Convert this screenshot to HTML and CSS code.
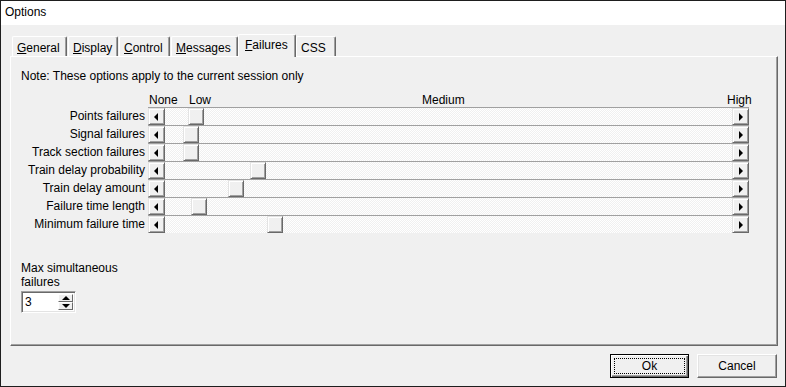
FILE: index.html
```html
<!DOCTYPE html>
<html lang="en">
<head>
    <meta charset="UTF-8">
    <meta name="viewport" content="width=device-width, initial-scale=1.0">
    <title>Options</title>
    <link rel="stylesheet" href="styles.css">
</head>
<body>
    <div class="window">
        <div class="titlebar">Options</div>

        <div class="client">
            <div class="tabs">
                <div class="tab tab-general"><u>G</u>eneral</div>
                <div class="tab tab-display"><u>D</u>isplay</div>
                <div class="tab tab-control"><u>C</u>ontrol</div>
                <div class="tab tab-messages"><u>M</u>essages</div>
                <div class="tab tab-failures selected"><u>F</u>ailures</div>
                <div class="tab tab-css">CSS</div>
            </div>

            <div class="panel">
                <p class="note">Note: These options apply to the current session only</p>

                <div class="scale-row">
                    <div class="scale">
                        <span class="lvl" style="left: 1px">None</span>
                        <span class="lvl" style="left: 41px">Low</span>
                        <span class="lvl" style="left: 274px">Medium</span>
                        <span class="lvl" style="left: 579px">High</span>
                    </div>
                </div>

                <div class="sliders">
                    <div class="row">
                        <span class="label">Points failures</span>
                        <div class="scrollbar">
                            <div class="btn"><i class="arrow-left"></i></div>
                            <div class="track"><div class="thumb" style="margin-left: 23px"></div></div>
                            <div class="btn"><i class="arrow-right"></i></div>
                        </div>
                    </div>
                    <div class="row">
                        <span class="label">Signal failures</span>
                        <div class="scrollbar">
                            <div class="btn"><i class="arrow-left"></i></div>
                            <div class="track"><div class="thumb" style="margin-left: 18px"></div></div>
                            <div class="btn"><i class="arrow-right"></i></div>
                        </div>
                    </div>
                    <div class="row">
                        <span class="label">Track section failures</span>
                        <div class="scrollbar">
                            <div class="btn"><i class="arrow-left"></i></div>
                            <div class="track"><div class="thumb" style="margin-left: 18px"></div></div>
                            <div class="btn"><i class="arrow-right"></i></div>
                        </div>
                    </div>
                    <div class="row">
                        <span class="label">Train delay probability</span>
                        <div class="scrollbar">
                            <div class="btn"><i class="arrow-left"></i></div>
                            <div class="track"><div class="thumb" style="margin-left: 85px"></div></div>
                            <div class="btn"><i class="arrow-right"></i></div>
                        </div>
                    </div>
                    <div class="row">
                        <span class="label">Train delay amount</span>
                        <div class="scrollbar">
                            <div class="btn"><i class="arrow-left"></i></div>
                            <div class="track"><div class="thumb" style="margin-left: 63px"></div></div>
                            <div class="btn"><i class="arrow-right"></i></div>
                        </div>
                    </div>
                    <div class="row">
                        <span class="label">Failure time length</span>
                        <div class="scrollbar">
                            <div class="btn"><i class="arrow-left"></i></div>
                            <div class="track"><div class="thumb" style="margin-left: 26px"></div></div>
                            <div class="btn"><i class="arrow-right"></i></div>
                        </div>
                    </div>
                    <div class="row">
                        <span class="label">Minimum failure time</span>
                        <div class="scrollbar">
                            <div class="btn"><i class="arrow-left"></i></div>
                            <div class="track"><div class="thumb" style="margin-left: 102px"></div></div>
                            <div class="btn"><i class="arrow-right"></i></div>
                        </div>
                    </div>
                </div>

                <div class="max-block">
                    <div class="max-label">Max simultaneous<br>failures</div>
                    <div class="spin">
                        <span class="spin-value">3</span>
                        <div class="spin-btns">
                            <div class="spin-btn"><i class="arrow-up"></i></div>
                            <div class="spin-btn"><i class="arrow-down"></i></div>
                        </div>
                    </div>
                </div>
            </div>

            <div class="buttons">
                <button class="push default"><span class="focus">Ok</span></button>
                <button class="push">Cancel</button>
            </div>
        </div>
    </div>
</body>
</html>
```

FILE: styles.css
```css
* {
    box-sizing: border-box;
}

body {
    margin: 0;
    padding: 0;
    width: 786px;
    height: 387px;
    overflow: hidden;
    font-family: 'Liberation Sans', Arial, sans-serif;
    font-size: 12px;
    color: #000;
    background-color: #f0f0f0;
}

.window {
    width: 786px;
    height: 387px;
    border: 1px solid #1e1e1e;
    display: flex;
    flex-direction: column;
}

.titlebar {
    height: 24px;
    background-color: #fff;
    font-size: 12px;
    line-height: 23px;
    padding-left: 4px;
}

.client {
    flex: 1;
    background-color: #f0f0f0;
    padding: 9px 8px 0 9px;
}

/* tab strip */
.tabs {
    display: flex;
    align-items: flex-end;
    height: 22px;
    padding-left: 2px;
}

.tab {
    height: 20px;
    line-height: 23px;
    padding-left: 4px;
    border-top: 1px solid #fff;
    border-left: 1px solid #fff;
    border-right: 1px solid #696969;
    box-shadow: inset -1px 0 0 #a0a0a0;
    border-radius: 2px 2px 0 0;
    margin-right: 1px;
    background-color: #f0f0f0;
    white-space: nowrap;
}

.tab-general { width: 55px; }
.tab-display { width: 50px; }
.tab-control { width: 51px; }
.tab-messages { width: 67px; }
.tab-css { width: 40px; }

.tab.selected {
    width: 58px;
    height: 23px;
    line-height: 20px;
    margin: 0 -1px -1px -1px;
    padding-left: 6px;
    position: relative;
    z-index: 1;
}

.tab.selected + .tab {
    margin-left: 1px;
}

.panel {
    width: 768px;
    height: 290px;
    border-top: 1px solid #fff;
    border-left: 1px solid #fff;
    border-right: 1px solid #696969;
    border-bottom: 1px solid #696969;
    box-shadow: inset -1px -1px 0 #a0a0a0;
    padding: 13px 0 0 0;
}

.note {
    margin: 0 0 0 10px;
    line-height: 13px;
}

/* level scale above sliders */
.scale-row {
    margin-top: 11px;
    padding-left: 137px;
    height: 13px;
}

.scale {
    position: relative;
    width: 601px;
    height: 13px;
    line-height: 13px;
}

.lvl {
    position: absolute;
    top: 0;
}

/* slider rows */
.sliders {
    display: flex;
    flex-direction: column;
}

.row {
    display: flex;
    align-items: stretch;
    height: 18px;
}

.label {
    width: 134px;
    text-align: right;
    line-height: 18px;
    margin-right: 3px;
    white-space: nowrap;
}

.scrollbar {
    width: 601px;
    display: flex;
    border-top: 1px solid #a0a0a0;
}

.btn, .thumb {
    width: 17px;
    height: 17px;
    background-color: #f0f0f0;
    border-top: 1px solid #e3e3e3;
    border-left: 1px solid #e3e3e3;
    border-right: 1px solid #696969;
    border-bottom: 1px solid #696969;
    box-shadow: inset 1px 1px 0 #fff, inset -1px -1px 0 #a0a0a0;
    display: flex;
    align-items: center;
    justify-content: center;
    flex-shrink: 0;
}

.thumb {
    width: 16px;
}

.track {
    flex: 1;
    display: flex;
    background: repeating-conic-gradient(#fff 0 25%, #f0f0f0 0 50%) 0 0 / 2px 2px;
}

.arrow-left {
    width: 0;
    height: 0;
    border-top: 4px solid transparent;
    border-bottom: 4px solid transparent;
    border-right: 4px solid #000;
    margin-left: -1px;
}

.arrow-right {
    width: 0;
    height: 0;
    border-top: 4px solid transparent;
    border-bottom: 4px solid transparent;
    border-left: 4px solid #000;
    margin-left: 1px;
}

/* spin edit */
.max-block {
    margin: 29px 0 0 10px;
}

.max-label {
    line-height: 14px;
    height: 26px;
    margin-top: -1px;
    margin-bottom: 4px;
}

.spin {
    width: 55px;
    height: 22px;
    display: flex;
    background-color: #fff;
    border-top: 1px solid #a0a0a0;
    border-left: 1px solid #a0a0a0;
    border-right: 1px solid #fff;
    border-bottom: 1px solid #fff;
    box-shadow: inset 1px 1px 0 #696969, inset -1px -1px 0 #e3e3e3;
    padding: 2px 2px 2px 3px;
}

.spin-value {
    flex: 1;
    font-size: 12px;
    line-height: 17px;
}

.spin-btns {
    width: 15px;
    display: flex;
    flex-direction: column;
}

.spin-btn {
    flex: 1;
    background-color: #f0f0f0;
    border-top: 1px solid #fff;
    border-left: 1px solid #fff;
    border-right: 1px solid #696969;
    border-bottom: 1px solid #696969;
    display: flex;
    align-items: center;
    justify-content: center;
}

.arrow-up {
    width: 0;
    height: 0;
    border-left: 4px solid transparent;
    border-right: 4px solid transparent;
    border-bottom: 4px solid #000;
}

.arrow-down {
    width: 0;
    height: 0;
    border-left: 4px solid transparent;
    border-right: 4px solid transparent;
    border-top: 4px solid #000;
}

/* dialog buttons */
.buttons {
    display: flex;
    justify-content: flex-end;
    gap: 8px;
    margin-top: 8px;
}

.push {
    width: 80px;
    height: 24px;
    font-family: 'Liberation Sans', Arial, sans-serif;
    font-size: 12px;
    color: #000;
    background-color: #f0f0f0;
    border-top: 1px solid #fff;
    border-left: 1px solid #fff;
    border-right: 1px solid #696969;
    border-bottom: 1px solid #696969;
    box-shadow: inset -1px -1px 0 #a0a0a0, inset 1px 1px 0 #e3e3e3;
    padding: 0;
    display: flex;
    align-items: center;
    justify-content: center;
}

.push.default {
    width: 79px;
    border: 1px solid #000;
    box-shadow: inset 1px 1px 0 #fff, inset -1px -1px 0 #696969, inset -2px -2px 0 #a0a0a0;
    padding: 3px;
}

.focus {
    width: 100%;
    height: 100%;
    border: 1px dotted #000;
    display: flex;
    align-items: center;
    justify-content: center;
}
```
